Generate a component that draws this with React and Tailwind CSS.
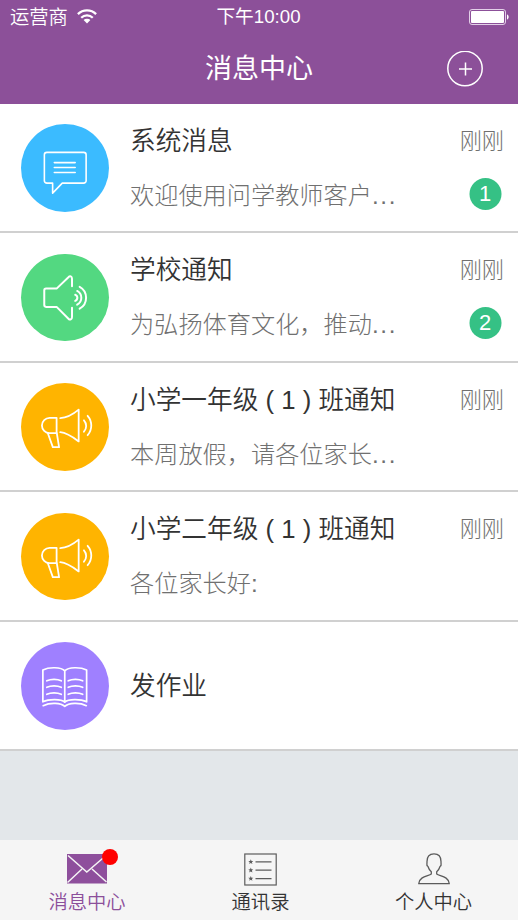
const messages = [
  { id: 1, icon: ChatIcon, color: 'bg-[#3bbbff]', title: '系统消息', text: '欢迎使用问学教师客户', more: true, time: '刚刚', unread: 1 },
  { id: 2, icon: SpeakerIcon, color: 'bg-[#53d881]', title: '学校通知', text: '为弘扬体育文化，推动', more: true, time: '刚刚', unread: 2 },
  { id: 3, icon: MegaphoneIcon, color: 'bg-[#ffb400]', title: '小学一年级 ( 1 ) 班通知', text: '本周放假，请各位家长', more: true, time: '刚刚' },
  { id: 4, icon: MegaphoneIcon, color: 'bg-[#ffb400]', title: '小学二年级 ( 1 ) 班通知', text: '各位家长好:', time: '刚刚' },
  { id: 5, icon: BookIcon, color: 'bg-[#9f80ff]', title: '发作业' },
];

const tabs = [
  { label: '消息中心', icon: MailIcon, active: true, dot: true },
  { label: '通讯录', icon: ContactsIcon },
  { label: '个人中心', icon: PersonIcon },
];

const stroke = {
  fill: 'none',
  stroke: 'currentColor',
  strokeLinecap: 'round',
  strokeLinejoin: 'round',
};

function ChatIcon() {
  return (
    <svg viewBox="0 0 88 88" className="w-full h-full" {...stroke} strokeWidth="1.6">
      <path d="M26 28.500H63a2.500 2.500 0 0 1 2.500 2.500V57a2.500 2.500 0 0 1-2.500 2.500H41.500L31.800 69.500V59.500H26a2.500 2.500 0 0 1-2.500-2.500V31a2.500 2.500 0 0 1 2.500-2.500" />
      <path d="M33.500 38.800h21M33.500 43.800h21M33.500 48.800h21" />
    </svg>
  );
}

function SpeakerIcon() {
  return (
    <svg viewBox="0 0 88 88" className="w-full h-full" {...stroke} strokeWidth="2">
      <path d="M51.300 32.500V25c0-2.800-2-3.400-3.600-1.700L35.800 34.800H25.200a1.800 1.800 0 0 0-1.800 1.800v14.800a1.800 1.800 0 0 0 1.800 1.800h10.600l11.900 11.900c1.600 1.600 3.600.9 3.600-1.700V54" />
      <path d="M54.500 41a3.300 3.300 0 0 1 0 6.200M56.500 37.200a7.800 7.800 0 0 1 0 13.800M59 33a12.600 12.600 0 0 1 0 22" />
    </svg>
  );
}

function MegaphoneIcon() {
  return (
    <svg viewBox="0 0 88 88" className="w-full h-full" {...stroke} strokeWidth="1.8">
      <path d="M35.800 35v15.500h-7a7.750 7.750 0 0 1 0-15.500z" />
      <path d="M27 50.500l5 14h6.300L36 50.500" />
      <path d="M39.500 35.300C46 35 53 31 58 26.800v32C53 55 46 50 39.500 49.500" />
      <path d="M63.300 37.500a8.500 8.500 0 0 1 0 11.500M67 33a14.800 14.800 0 0 1 0 19.500" />
    </svg>
  );
}

function BookIcon() {
  return (
    <svg viewBox="0 0 88 88" className="w-full h-full" {...stroke} strokeWidth="1.7">
      <path d="M44 29V60.500M44 29c-3.500-4-16-4-22-.8v32c6-3 18.500-3 22 .3 3.500-3.300 16-3.300 22-.3v-32c-6-3.200-18.500-3.200-22 .8" />
      <path d="M22.300 64c7-3.500 18-3 21.700.8 3.700-3.800 15-4.300 21.700-.8" />
      <path d="M26 39c4-2 10.500-2 14.500 0M26 45.600c4-2 10.500-2 14.500 0M26 52.600c4-2 10.500-2 14.500 0M47.500 39c4-2 10.500-2 14.500 0M47.500 45.600c4-2 10.500-2 14.500 0M47.500 52.600c4-2 10.500-2 14.500 0" />
    </svg>
  );
}

function MailIcon() {
  return (
    <svg viewBox="0 0 40 30" className="w-10 h-[30px]">
      <rect width="40" height="29.500" fill="#8e4f9c" />
      <path d="M1 1.500L19.800 18 39 1.500M0.500 28.500L15 15M39.500 28L25 15" fill="none" stroke="#f5f5f5" strokeWidth="1.5" />
    </svg>
  );
}

function ContactsIcon() {
  return (
    <svg viewBox="0 0 33 33" className="w-[33px] h-[33px]" fill="none" stroke="#5c5c5c" strokeWidth="1.200">
      <rect x="0.800" y="1" width="31.400" height="31" />
      <path d="M11.500 8.800h16M11.500 17.200h16M11.500 25.600h16" />
      {[8.8, 17.2, 25.6].map((y) => (
        <path
          key={y}
          transform={`translate(6.800 ${y})`}
          d="M0-2.600L.7-.9 2.500-.8 1.100.4 1.600 2.200 0 1.200-1.600 2.200-1.100.4-2.500-.8-.7-.9z"
          fill="#5c5c5c"
          stroke="none"
        />
      ))}
    </svg>
  );
}

function PersonIcon() {
  return (
    <svg viewBox="0 0 32 32" className="w-8 h-8" {...stroke} strokeWidth="1.300">
      <path d="M13.300 21v-2.200c-2-1.800-2.800-3.600-3.300-5.300-.9-.5-1.300-1.400-1.100-2.500.1-.7.100-1.400.100-2.500C9 3.500 11 .9 16 .9s7 2.600 7 7.600c0 1.100 0 1.800.1 2.500.2 1.100-.2 2-1.100 2.500-.5 1.700-1.300 3.500-3.300 5.300V21c2.800 2.200 12 2.200 12.600 9.700H.7C1.300 23.200 10.500 23.200 13.300 21z" />
    </svg>
  );
}

function StatusBar() {
  return (
    <div className="h-[33px] grid grid-cols-3 items-center pl-[10px] pr-[9px] text-[18.700px] leading-8">
      <div className="flex items-center gap-[9px]">
        <span className="font-[350] text-[19.300px] translate-y-px">运营商</span>
        <svg viewBox="0 0 20 15" className="w-5 h-[15px]" fill="none" stroke="white" strokeWidth="2.300">
          <path d="M.9 5.100a13 13 0 0 1 18.200 0M4.200 8.800a8.300 8.300 0 0 1 11.600 0" />
          <path d="M10 14.500L6.600 11.100a4.800 4.800 0 0 1 6.800 0z" fill="white" stroke="none" />
        </svg>
      </div>
      <span className="text-center whitespace-nowrap -translate-x-px">下午10:00</span>
      <svg viewBox="0 0 40 16" className="w-10 h-4 justify-self-end">
        <rect x="0.500" y="0.500" width="36" height="15" rx="2.500" fill="none" stroke="#e3d0e8" />
        <rect x="2" y="2" width="33" height="12" rx="1" fill="white" />
        <path d="M38 5.500c2.200.6 2.200 4.400 0 5z" fill="white" />
      </svg>
    </div>
  );
}

function MessageRow({ item }) {
  const Icon = item.icon;
  return (
    <li className="h-[129.500px] bg-white border-b-2 border-[#d0d0d0] flex items-center pt-[2px] pl-[21px] pr-[14px]">
      <div className={`w-[87.500px] h-[87.500px] shrink-0 mb-px rounded-full text-white ${item.color}`}>
        <Icon />
      </div>
      <div className="flex-1 min-w-0 ml-[21.500px] flex flex-col gap-[19px]">
        <h2 className="text-[25.700px] leading-9 font-[350] text-[#333] whitespace-nowrap">{item.title}</h2>
        {item.text && (
          <p className="text-[24.200px] leading-9 font-light text-[#707070] whitespace-nowrap">
            {item.text}
            {item.more && <span className="tracking-[1.700px]">...</span>}
          </p>
        )}
      </div>
      {item.time && (
        <div className="flex flex-col items-end gap-[17px]">
          <span className="text-[22.200px] leading-9 font-light text-[#707070]">{item.time}</span>
          <div className="h-9 flex items-center pr-[2.500px]">
            {item.unread && (
              <span className="w-8 h-8 -translate-x-[0.5px] -translate-y-px rounded-full bg-[#35c185] text-white text-[22px] leading-8 text-center">
                {item.unread}
              </span>
            )}
          </div>
        </div>
      )}
    </li>
  );
}

export default function App() {
  return (
    <div className="w-full h-screen flex flex-col overflow-hidden bg-[#e3e7ea] font-['Liberation_Sans','Noto_Sans_CJK_SC',sans-serif]">
      <header className="h-[103.500px] shrink-0 bg-[#8c5099] text-white">
        <StatusBar />
        <div className="h-[71px] grid grid-cols-[1fr_auto_1fr] items-center">
          <h1 className="col-start-2 text-[27px] leading-10">消息中心</h1>
          <button className="justify-self-end mr-[35.500px] w-9 h-9">
            <svg viewBox="0 0 36 36" fill="none" stroke="white" strokeWidth="1.500">
              <circle cx="18" cy="17.500" r="17.200" />
              <path d="M12 18h13M18.500 11.500v13" />
            </svg>
          </button>
        </div>
      </header>

      <ul className="flex-1">
        {messages.map((item) => (
          <MessageRow key={item.id} item={item} />
        ))}
      </ul>

      {/* Bottom tabs */}
      <nav className="w-[520px] h-20 shrink-0 bg-[#f5f5f5] grid grid-cols-[174px_173px_173px]">
        {tabs.map(({ label, icon: Icon, active, dot }) => (
          <button key={label} className="flex flex-col items-center pt-3">
            <span className="relative h-[34px] flex items-center text-[#5c5c5c]">
              <Icon />
              {dot && <span className="absolute -top-[3px] -right-[11px] w-4 h-4 rounded-full bg-[#ff0000]" />}
            </span>
            <span className={`text-[19.300px] leading-[34px] font-[350] ${active ? 'text-[#8c4f9b]' : 'text-[#333]'}`}>{label}</span>
          </button>
        ))}
      </nav>
    </div>
  );
}
